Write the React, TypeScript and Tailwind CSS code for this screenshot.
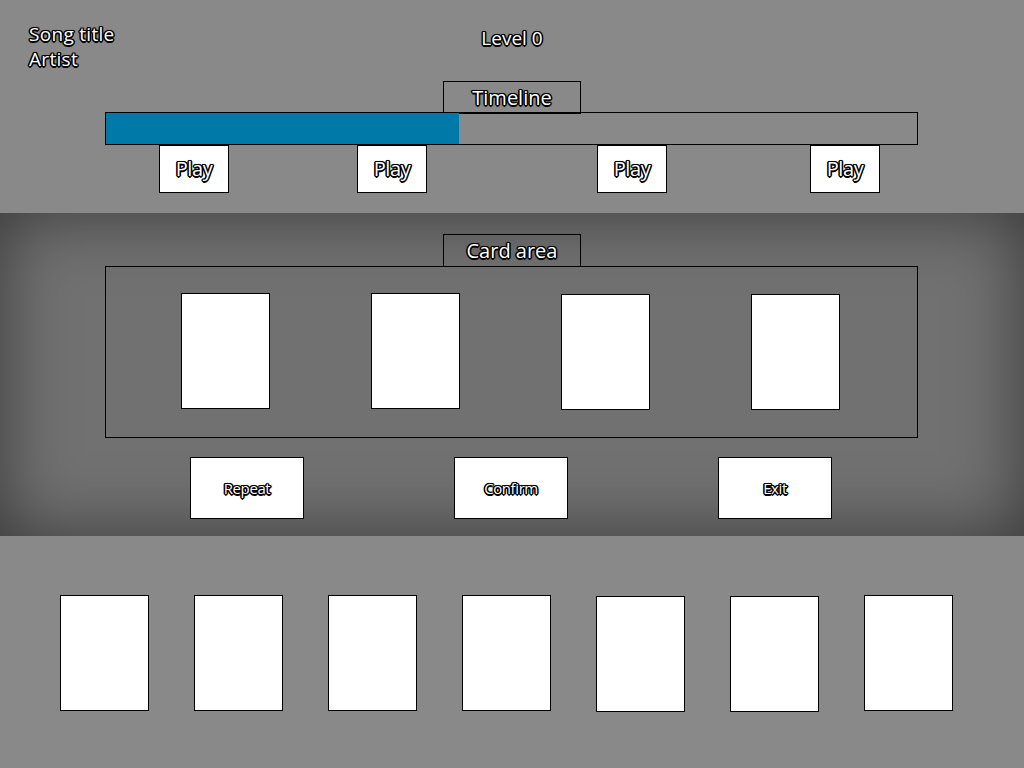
const outline =
  "[text-shadow:-1px_-1px_0_#000,1px_-1px_0_#000,-1px_1px_0_#000,1px_1px_0_#000,0_-1.5px_0_#000,0_1.5px_0_#000,-1.5px_0_0_#000,1.5px_0_0_#000,0_0_2px_#000]";

const font = "font-['Open_Sans',sans-serif]";

function Card({ className = "" }: { className?: string }) {
  return <div className={`h-[116px] w-[89px] shrink-0 border border-black bg-white ${className}`} />;
}

function PlayButton({ className = "" }: { className?: string }) {
  return (
    <button
      className={`flex h-[48px] w-[70px] shrink-0 items-center justify-center border border-black bg-white text-[20px] tracking-[-0.4px] text-white ${outline} ${className}`}
    >
      Play
    </button>
  );
}

function ActionButton({ label }: { label: string }) {
  return (
    <button
      className={`flex h-[62px] w-[114px] items-center justify-center border border-black bg-white text-[15px] tracking-[-0.4px] text-white ${outline}`}
    >
      {label}
    </button>
  );
}

function Label({ text }: { text: string }) {
  return (
    <div
      className={`flex h-[33px] w-[138px] items-center justify-center border border-black text-[20px] text-white ${outline}`}
    >
      {text}
    </div>
  );
}

export default function App() {
  const progress = 43.5;

  return (
    <div className={`flex h-[768px] w-[1024px] flex-col ${font}`}>
      {/* top: song info + timeline */}
      <div className="flex h-[213px] flex-col bg-[#898989]">
        <div className="grid grid-cols-[1fr_auto_1fr] pt-[22px]">
          <div className={`pl-[29px] text-[19px] leading-[25px] tracking-[0.3px] text-white ${outline}`}>
            <div>Song title</div>
            <div>Artist</div>
          </div>
          <div className={`pt-[4px] text-[19px] leading-[25px] text-white ${outline}`}>Level 0</div>
          <div />
        </div>

        <div className="mt-[9px] flex flex-col items-center">
          <Label text="Timeline" />
          <div className="-mt-[2px] ml-[105px] h-[33px] w-[813px] self-start border border-black">
            <div className="h-full bg-[#0078a8]" style={{ width: `${progress}%` }} />
          </div>
          <div className="ml-[105px] flex w-[813px] self-start">
            <PlayButton className="ml-[54px]" />
            <PlayButton className="ml-[128px]" />
            <PlayButton className="ml-[170px]" />
            <PlayButton className="ml-[143px]" />
          </div>
        </div>
      </div>

      {/* middle: card area */}
      <div className="flex h-[323px] flex-col items-center bg-[#717171] pt-[21px] shadow-[inset_0_0_70px_rgba(0,0,0,0.5)]">
        <Label text="Card area" />
        <div className="-mt-px ml-[105px] flex h-[172px] w-[813px] gap-[101px] self-start border border-black pl-[75px] pt-[26px]">
          <Card />
          <Card />
          <Card className="mt-px" />
          <Card className="mt-px" />
        </div>
        <div className="mt-[19px] ml-[190px] flex gap-[150px] self-start">
          <ActionButton label="Repeat" />
          <ActionButton label="Confirm" />
          <ActionButton label="Exit" />
        </div>
      </div>

      {/* bottom: hand */}
      <div className="flex flex-1 items-start gap-[45px] bg-[#898989] pl-[60px] pt-[59px]">
        <Card />
        <Card />
        <Card />
        <Card />
        <Card className="mt-px" />
        <Card className="mt-px" />
        <Card />
      </div>
    </div>
  );
}
